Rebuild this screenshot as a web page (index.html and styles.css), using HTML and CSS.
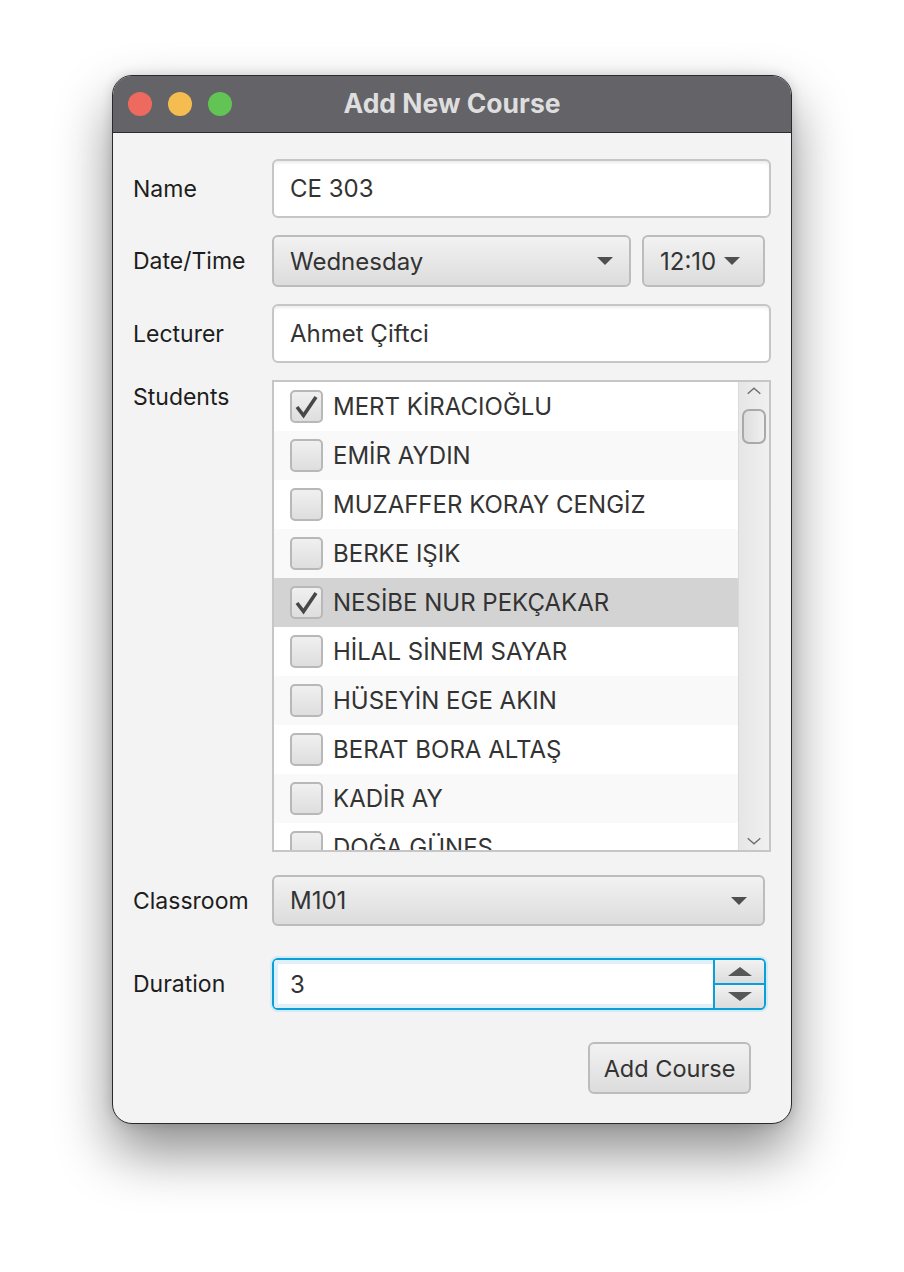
FILE: index.html
```html
<!DOCTYPE html>
<html>
<head>
<meta charset="utf-8">
<link rel="stylesheet" href="styles.css">
</head>
<body>
<div class="window">
  <div class="titlebar">
    <div class="lights">
      <span class="light red"></span>
      <span class="light yellow"></span>
      <span class="light green"></span>
    </div>
    <div class="title">Add New Course</div>
  </div>
  <div class="content">
    <div class="row r-name">
      <div class="label">Name</div>
      <div class="field text-field">CE 303</div>
    </div>
    <div class="row r-date">
      <div class="label">Date/Time</div>
      <div class="field combos">
        <div class="combo combo-day"><span>Wednesday</span><i class="arrow"></i></div>
        <div class="combo combo-time"><span>12:10</span><i class="arrow"></i></div>
      </div>
    </div>
    <div class="row r-lect">
      <div class="label">Lecturer</div>
      <div class="field text-field">Ahmet Çiftci</div>
    </div>
    <div class="row r-students">
      <div class="label top">Students</div>
      <div class="field list">
        <div class="list-rows">
          <div class="item"><span class="cb checked"><svg viewBox="0 0 29 29"><path d="M5 15 L11.5 23.5 L24 5" /></svg></span>MERT KİRACIOĞLU</div>
          <div class="item alt"><span class="cb"></span>EMİR AYDIN</div>
          <div class="item"><span class="cb"></span>MUZAFFER KORAY CENGİZ</div>
          <div class="item alt"><span class="cb"></span>BERKE IŞIK</div>
          <div class="item sel"><span class="cb checked"><svg viewBox="0 0 29 29"><path d="M5 15 L11.5 23.5 L24 5" /></svg></span>NESİBE NUR PEKÇAKAR</div>
          <div class="item"><span class="cb"></span>HİLAL SİNEM SAYAR</div>
          <div class="item alt"><span class="cb"></span>HÜSEYİN EGE AKIN</div>
          <div class="item"><span class="cb"></span>BERAT BORA ALTAŞ</div>
          <div class="item alt"><span class="cb"></span>KADİR AY</div>
          <div class="item"><span class="cb"></span>DOĞA GÜNEŞ</div>
        </div>
        <div class="scrollbar">
          <svg class="chev" viewBox="0 0 20 10"><path d="M3 8 L10 2 L17 8"/></svg>
          <div class="thumb-track"><div class="thumb"></div></div>
          <svg class="chev" viewBox="0 0 20 10"><path d="M3 2 L10 8 L17 2"/></svg>
        </div>
      </div>
    </div>
    <div class="row r-class">
      <div class="label">Classroom</div>
      <div class="field combo combo-class"><span>M101</span><i class="arrow"></i></div>
    </div>
    <div class="row r-dur">
      <div class="label">Duration</div>
      <div class="field spinner">
        <div class="spin-text">3</div>
        <div class="spin-btns">
          <div class="spin-btn"><i class="up"></i></div>
          <div class="spin-btn"><i class="down"></i></div>
        </div>
      </div>
    </div>
    <div class="actions">
      <div class="button">Add Course</div>
    </div>
  </div>
</div>
</body>
</html>
```

FILE: styles.css
```css
html, body {
  margin: 0;
  padding: 0;
  background: #ffffff;
}
body {
  width: 904px;
  height: 1272px;
  overflow: hidden;
  font-family: "Inter", "Liberation Sans", sans-serif;
}
.window {
  margin: 75px 0 0 112px;
  width: 678px;
  height: 1047px;
  border: 1px solid #2a2a2c;
  border-radius: 20px;
  background: #f3f3f3;
  overflow: hidden;
  box-shadow: 0 28px 55px rgba(0, 0, 0, 0.45), 0 0 12px rgba(0,0,0,0.15);
}
.titlebar {
  height: 56px;
  background: #646368;
  border-bottom: 1px solid #2b2b2d;
  display: flex;
  align-items: center;
  position: relative;
}
.lights {
  display: flex;
  gap: 16px;
  padding-left: 15px;
}
.light {
  width: 24px;
  height: 24px;
  border-radius: 50%;
  display: block;
}
.red { background: #ee6a5f; }
.yellow { background: #f5bd4f; }
.green { background: #61c454; }
.title {
  position: absolute;
  left: 0;
  right: 0;
  top: 0;
  bottom: 2px;
  display: flex;
  align-items: center;
  justify-content: center;
  color: #dededf;
  font-weight: 700;
  font-size: 26.5px;
  letter-spacing: 0;
}
.content {
  padding: 26px 20px 0 20px;
  color: #333333;
  font-size: 24px;
}
.row {
  display: flex;
  align-items: center;
}
.label {
  width: 139px;
  flex: none;
  color: #1d1d1d;
  font-size: 23px;
}
.label.top {
  align-self: flex-start;
  padding-top: 3px;
}
.field {
  flex: 1;
  box-sizing: border-box;
}
.text-field {
  height: 59px;
  border: 2px solid #c6c6c6;
  border-radius: 6px;
  background: #ffffff;
  box-shadow: inset 0 3px 3px -1px #ececec;
  padding-left: 16px;
  display: flex;
  align-items: center;
}
.r-date { margin-top: 17px; }
.r-lect { margin-top: 17px; }
.r-students { margin-top: 17px; align-items: flex-start; }
.r-class { margin-top: 23px; }
.r-dur { margin-top: 32px; }
.combos {
  display: flex;
  gap: 11px;
  padding-right: 7px;
}
.combo {
  height: 52px;
  box-sizing: border-box;
  border: 2px solid #bcbcbc;
  border-radius: 6px;
  background: linear-gradient(#f2f2f2, #dcdcdc);
  display: flex;
  align-items: center;
  padding-left: 16px;
  padding-right: 16px;
}
.combo span { flex: 1; }
.combo-day { width: 359px; }
.combo-time { width: 123px; }
.combo-time span { flex: none; margin-right: 8px; }
.combo-class {
  flex: none;
  width: 493px;
  height: 51px;
}
.arrow {
  display: block;
  width: 0;
  height: 0;
  border-left: 8px solid transparent;
  border-right: 8px solid transparent;
  border-top: 8px solid #4f4f4f;
}
.list {
  height: 472px;
  border: 2px solid #c6c6c6;
  background: #ffffff;
  display: flex;
  overflow: hidden;
}
.list-rows {
  flex: 1;
  overflow: hidden;
}
.item {
  height: 49px;
  display: flex;
  align-items: center;
  padding-left: 16px;
  color: #333333;
  font-size: 24px;
  white-space: nowrap;
}
.item.alt { background: #f9f9f9; }
.item.sel { background: #d3d3d3; }
.cb {
  width: 33px;
  height: 33px;
  box-sizing: border-box;
  border: 2px solid #b8b8b8;
  border-radius: 5px;
  background: linear-gradient(#f0f0f0, #dedede);
  margin-right: 10px;
  flex: none;
  display: flex;
}
.cb svg {
  width: 29px;
  height: 29px;
}
.cb path {
  fill: none;
  stroke: #474747;
  stroke-width: 3.6;
  stroke-linejoin: miter;
  stroke-linecap: butt;
}
.scrollbar {
  width: 30px;
  flex: none;
  border-left: 1px solid #dadada;
  background: linear-gradient(90deg, #e6e6e6, #f0f0f0);
  display: flex;
  flex-direction: column;
  align-items: center;
}
.chev {
  width: 18px;
  height: 10px;
  margin: 4px 0;
  flex: none;
}
.chev path {
  fill: none;
  stroke: #6e6e6e;
  stroke-width: 1.6;
}
.thumb-track {
  flex: 1;
  align-self: stretch;
  padding: 9px 3px 0 3px;
}
.thumb {
  height: 35px;
  box-sizing: border-box;
  border: 2px solid #a9a9a9;
  border-radius: 7px;
  background: linear-gradient(90deg, #dedede, #efefef);
}
.spinner {
  flex: none;
  width: 494px;
  height: 52px;
  border: 2px solid #0a9fd8;
  border-radius: 6px;
  box-shadow: 0 0 0 2px #d2ebf5;
  display: flex;
  overflow: hidden;
  background: #ffffff;
}
.spin-text {
  flex: 1;
  border: 4px solid #dff0f8;
  border-right: none;
  background: #ffffff;
  display: flex;
  align-items: center;
  padding-left: 12px;
}
.spin-btns {
  width: 49px;
  border-left: 2px solid #0a9fd8;
  display: flex;
  flex-direction: column;
}
.spin-btn {
  flex: 1;
  background: linear-gradient(#f2f2f2, #dcdcdc);
  display: flex;
  align-items: center;
  justify-content: center;
}
.spin-btn + .spin-btn {
  border-top: 2px solid #0a9fd8;
}
.spin-btn i {
  width: 0;
  height: 0;
  border-left: 12px solid transparent;
  border-right: 12px solid transparent;
}
.spin-btn i.up { border-bottom: 9px solid #575757; }
.spin-btn i.down { border-top: 9px solid #575757; }
.actions {
  display: flex;
  justify-content: flex-end;
  margin-top: 32px;
  padding-right: 20px;
}
.button {
  width: 163px;
  height: 52px;
  box-sizing: border-box;
  border: 2px solid #bcbcbc;
  border-radius: 6px;
  background: linear-gradient(#f2f2f2, #dcdcdc);
  display: flex;
  align-items: center;
  justify-content: center;
  color: #333333;
  font-size: 23.5px;
}
```
